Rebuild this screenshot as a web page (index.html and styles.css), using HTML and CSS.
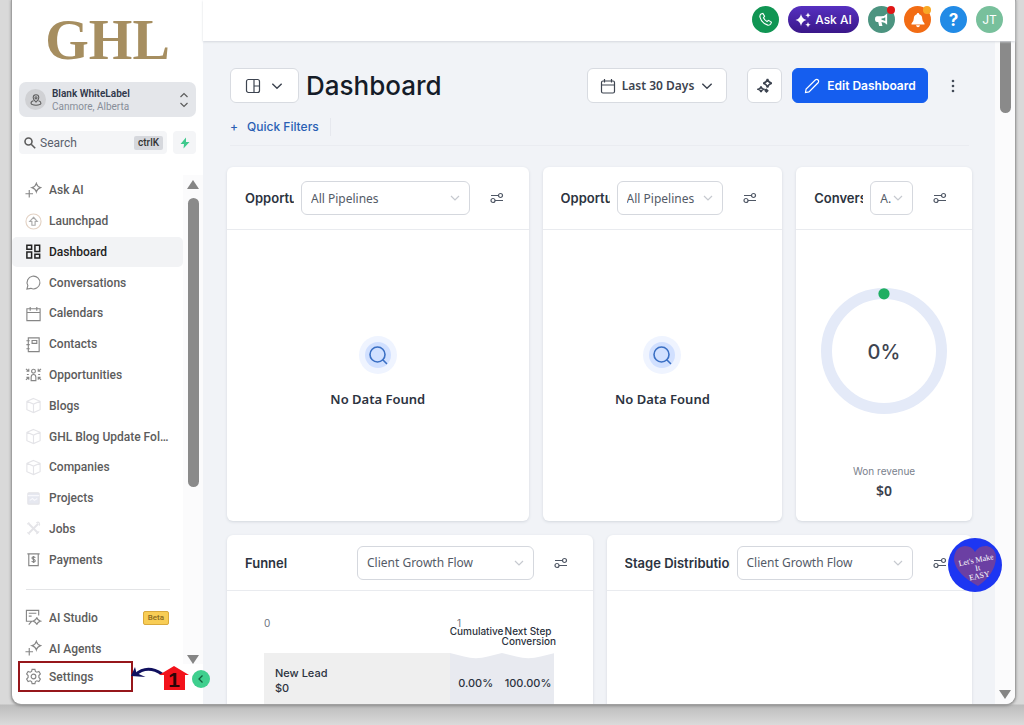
FILE: index.html
```
<!DOCTYPE html>
<html lang="en">

<head>
    <meta charset="UTF-8">
    <title>Dashboard</title>
    <link rel="stylesheet" href="styles.css">
</head>

<body>
    <!-- shared icons -->
    <svg class="sprite" width="0" height="0">
        <symbol id="chevron" viewBox="0 0 12 12"><path d="M2 4l4 4 4-4" /></symbol>
        <symbol id="filter" viewBox="0 0 14 12"><path d="M1 3.5h7M5 8.5h8" /><circle cx="10.5" cy="3.5" r="2" /><circle cx="3" cy="8.5" r="2" /></symbol>
        <symbol id="cube" viewBox="0 0 18 18"><path d="M9 1.5l7 3v9l-7 3-7-3v-9zM2 4.5l7 3 7-3M9 7.500v9" /></symbol>
        <symbol id="spark-plus" viewBox="0 0 18 18"><path d="M12 1.500q1 3.500 4.500 4.500-3.500 1-4.500 4.500-1-3.500-4.500-4.500 3.500-1 4.500-4.500zM4.500 8.500v8M.5 12.500h8" /></symbol>
        <symbol id="nodata" viewBox="0 0 38 38"><circle cx="19" cy="19" r="19" fill="#eff4ff" /><circle cx="19" cy="19" r="13" fill="#d1e0ff" /><circle cx="18.500" cy="18.500" r="7.500" fill="none" stroke="#3a6fc4" stroke-width="1.600" /><path d="M24 24l3.500 3.500" stroke="#3a6fc4" stroke-width="1.600" stroke-linecap="round" /></symbol>
        <symbol id="calendar" viewBox="0 0 16 16"><path d="M3 3h10q1.500 0 1.500 1.500v9q0 1.500-1.500 1.500h-10q-1.500 0-1.500-1.500v-9q0-1.500 1.500-1.500zM1.500 7h13M4.500 1v3.500M11.500 1v3.500" /></symbol>
    </svg>

    <div class="window">
        <aside class="sidebar">
            <div class="logo">GHL</div>
            <button class="account">
                <span class="avatar"><svg class="line" width="12" height="12" viewBox="0 0 14 14"><path d="M7 9.500q-3.300-3-3.300-5.200a3.300 3.300 0 0 1 6.600 0q0 2.200-3.300 5.200zM4 8q-3 1-2.800 3 .5 2 5.800 2t5.800-2q.2-2-2.800-3" /><circle cx="7" cy="4.500" r="1.200" /></svg></span>
                <span class="account-text"><b>Blank WhiteLabel</b><span>Canmore, Alberta</span></span>
                <svg class="line" width="10" height="16" viewBox="0 0 10 16"><path d="M1.500 5L5 1.500 8.500 5M1.500 11L5 14.500 8.500 11" /></svg>
            </button>
            <div class="search-row">
                <label class="search">
                    <svg class="line thick" width="12" height="12" viewBox="0 0 12 12"><circle cx="4.500" cy="4.500" r="3.500" /><path d="M7.200 7.200l4 4" /></svg>
                    <input type="text" placeholder="Search" aria-label="Search">
                    <kbd>ctrlK</kbd>
                </label>
                <button class="bolt" aria-label="Quick actions"><svg width="10" height="12" viewBox="0 0 10 12"><path d="M6 .5L.5 7h3.500L3.500 11.500 9.500 5H6z" fill="#3fc98d" /></svg></button>
            </div>

            <div class="menu-area">
                <nav class="menu">
                    <ul class="menu-list">
                        <li><a href="#"><svg class="line" viewBox="0 0 18 18"><use href="#spark-plus" /></svg><span>Ask AI</span></a></li>
                        <li><a href="#"><svg class="line pale" viewBox="0 0 18 18"><circle cx="9" cy="9" r="8" stroke="#e3d2c4" /><path d="M9 4.500l4 4.500h-2.300v4h-3.400v-4H5z" stroke="#aaa" /></svg><span>Launchpad</span></a></li>
                        <li><a href="#" class="active"><svg class="line thick" viewBox="0 0 18 18"><path d="M2 2.500h5v4H2zM10.500 2.500h5v6.500h-5zM2 9.500h5v6.500H2zM10.500 12h5v4h-5z" /></svg><span>Dashboard</span></a></li>
                        <li><a href="#"><svg class="line" viewBox="0 0 18 18"><path d="M2 16l1-3.800a6.800 6.800 0 1 1 3.200 3z" /></svg><span>Conversations</span></a></li>
                        <li><a href="#"><svg class="line" viewBox="0 0 18 18"><path d="M2 4h14v12.500H2zM2 8h14M5.500 2v4M12.500 2v4" /></svg><span>Calendars</span></a></li>
                        <li><a href="#"><svg class="line" viewBox="0 0 18 18"><path d="M3.500 2H15v14.500H3.500zM1.500 5h3.500M1.500 9.200h3.500M1.500 13.500h3.500M7.500 4.800h5v3h-5z" /></svg><span>Contacts</span></a></li>
                        <li><a href="#"><svg class="line" viewBox="0 0 18 18"><circle cx="9" cy="5.500" r="2" /><path d="M6.500 15.500V12q0-3 2.500-3t2.500 3v3.500zM1 3l3 2.500M4 3v2.500H1.500M17 3l-3 2.500M14 3v2.500h2.500M1 14.500l3-2.500M1.500 12H4v2.500M17 14.500L14 12M16.500 12H14v2.500M2 9h2M14 9h2" /></svg><span>Opportunities</span></a></li>
                        <li><a href="#"><svg class="line faint" viewBox="0 0 18 18"><use href="#cube" /></svg><span>Blogs</span></a></li>
                        <li><a href="#"><svg class="line faint" viewBox="0 0 18 18"><use href="#cube" /></svg><span>GHL Blog Update Folder</span></a></li>
                        <li><a href="#"><svg class="line faint" viewBox="0 0 18 18"><use href="#cube" /></svg><span>Companies</span></a></li>
                        <li><a href="#"><svg class="line faint" viewBox="0 0 18 18"><rect x="3" y="3" width="12" height="12" rx="1" fill="#e6e8f0" /><path d="M3 6h12M5 11l3-2 2 2 3-2" stroke="#f8f8fc" /></svg><span>Projects</span></a></li>
                        <li><a href="#"><svg class="line faint" viewBox="0 0 18 18"><path d="M4 4l10 10M14 4L4 14" stroke-width="2" /><path d="M2.500 4.500l2-2M12 3q2-1.500 3 0t0 3M12 15l3-3M2.500 13l2.500 2.500" /></svg><span>Jobs</span></a></li>
                        <li><a href="#"><svg class="line" viewBox="0 0 18 18"><path d="M2.500 3h13M4 3v12.500h10V3M11 7q-2-1.300-3.300-.4-.9 1.400 1.300 2.200 2.500.9 1.500 2.400-1.500 1-3.500-.3M9 5.300v7.400" /></svg><span>Payments</span></a></li>
                    </ul>
                    <ul class="menu-extra">
                        <li><a href="#"><svg class="line" viewBox="0 0 18 18"><path d="M8 13H1.500V1.500h13V7M4 4.500h8M4 7.500h3M4 16.500l3-3.500M12.500 9q.7 3 3.700 3.800-3 .8-3.700 3.800-.8-3-3.800-3.800 3-.8 3.800-3.800z" /></svg><span>AI Studio</span><em>Beta</em></a></li>
                        <li><a href="#"><svg class="line" viewBox="0 0 18 18"><use href="#spark-plus" /></svg><span>AI Agents</span></a></li>
                    </ul>
                </nav>
                <div class="scrollbar">
                    <i class="up"></i>
                    <i class="thumb"></i>
                    <i class="down"></i>
                </div>
            </div>

            <div class="settings-row">
                <a href="#" class="settings"><svg class="line" viewBox="0 0 18 18"><circle cx="9" cy="9" r="2.500" /><path d="M7.500 1.500h3l.5 2.200 1.500.8 2.200-.8 1.600 2.600-1.600 1.700v2l1.600 1.700-1.600 2.600-2.200-.8-1.500.8-.5 2.200h-3l-.5-2.200-1.500-.8-2.200.8-1.600-2.600L3.300 10V8L1.700 6.300l1.600-2.600 2.200.8L7 3.700z" /></svg><span>Settings</span></a>
                <!-- step marker pointing at Settings -->
                <svg class="step" width="58" height="30" viewBox="0 0 58 30">
                    <path d="M4 11Q16 0 31 10" fill="none" stroke="#10105e" stroke-width="3" />
                    <path d="M0 12L4 3l1.500 6 9 4z" fill="#10105e" />
                    <path d="M43 2l15 9h-4v15H33V11h-5z" fill="#f3121b" />
                    <text x="43" y="23" text-anchor="middle">1</text>
                </svg>
                <button class="collapse" aria-label="Collapse sidebar"><svg width="8" height="10" viewBox="0 0 8 10"><path d="M5.500 1.500L2 5l3.500 3.500" fill="none" stroke="#12603d" stroke-width="1.300" /></svg></button>
            </div>
        </aside>

        <main class="main">
            <header class="topbar">
                <button class="round phone" aria-label="Phone"><svg class="line" width="15" height="15" viewBox="0 0 16 16"><path d="M3.200 2.200l2-.7 1.800 3-1.200 1.700q1.200 2.600 3.800 4l1.700-1.300 3 1.900-.8 2q-1 1.600-3 1.200Q3.600 12 2 5.300q-.2-2.100 1.200-3.100z" /></svg></button>
                <button class="ask"><svg width="16" height="16" viewBox="0 0 16 16" fill="#fff"><path d="M6 2q1 5 5.500 6-4.500 1-5.500 6-1-5-5.500-6 4.500-1 5.500-6zM13 .5l.8 1.900 1.900.8-1.900.8-.8 1.900-.8-1.900-1.900-.8 1.900-.8zM13 10l.8 1.900 1.900.8-1.900.8-.8 1.900-.8-1.900-1.900-.8 1.900-.8z" /></svg>Ask AI</button>
                <button class="round news" aria-label="News"><svg width="15" height="15" viewBox="0 0 16 16" fill="#fff"><path fill-rule="evenodd" d="M14 1.500v12q-2.500-2.600-6-2.900L9 15H5.500l-1-4.400H3q-2-.3-2-3t2-3h4.500Q11.500 4.500 14 1.500zM12 5.500Q10 6.800 8 7v1.200q2 .2 4 1.500z" /></svg><i class="dot red"></i></button>
                <button class="round bell" aria-label="Notifications"><svg width="16" height="16" viewBox="0 0 16 16" fill="#fff"><path d="M8 1a1.200 1.200 0 0 1 1.200 1.300q3 1 3 4.200 0 3 2.300 5v1h-13v-1q2.300-2 2.300-5 0-3.200 3-4.200A1.200 1.200 0 0 1 8 1zM6 13.300h4q-.5 2-2 2t-2-2z" /></svg><i class="dot yellow"></i></button>
                <button class="round help">?</button>
                <button class="round user">JT</button>
            </header>

            <div class="scroll-area">
                <div class="content">
                    <div class="page-head">
                        <button class="btn layout" aria-label="Switch dashboard"><svg class="line" width="16" height="16" viewBox="0 0 16 16"><rect x="1.500" y="1.500" width="13" height="13" rx="2" /><path d="M9 1.500v13M9 8h5.500" /></svg><svg class="line" width="14" height="14"><use href="#chevron" /></svg></button>
                        <h1>Dashboard</h1>
                        <button class="btn range"><svg class="line" width="16" height="16"><use href="#calendar" /></svg>Last 30 Days<svg class="line" width="14" height="14"><use href="#chevron" /></svg></button>
                        <button class="btn magic" aria-label="AI insights"><svg class="line thick" width="16" height="16" viewBox="0 0 16 16"><path d="M10.500 1q.8 3.500 4.300 4.300-3.500.8-4.300 4.300-.8-3.500-4.300-4.300 3.500-.8 4.300-4.300zM4 8.500q.5 2.200 2.700 2.800Q4.500 11.900 4 14.100q-.5-2.200-2.700-2.800Q3.500 10.700 4 8.500zM9.500 11.500l1.200 1.200-1.200 1.200-1.200-1.200z" /></svg></button>
                        <button class="btn edit"><svg class="line" width="16" height="16" viewBox="0 0 16 16"><path d="M1.500 14.500l.6-3.500L11.500 1.700q1.500-.8 2.600.3t.2 2.500L5 13.900z" /></svg>Edit Dashboard</button>
                        <button class="more" aria-label="More"><svg width="4" height="14" viewBox="0 0 4 14" fill="#444b58"><circle cx="2" cy="2" r="1.300" /><circle cx="2" cy="7" r="1.300" /><circle cx="2" cy="12" r="1.300" /></svg></button>
                    </div>
                    <div class="filters">
                        <button><span>+</span>Quick Filters</button>
                    </div>

                    <div class="cards top">
                        <section class="card">
                            <div class="card-head">
                                <h2>Opportunity Status</h2>
                                <div class="select"><select aria-label="Pipeline"><option>All Pipelines</option></select><svg class="line" width="12" height="12"><use href="#chevron" /></svg></div>
                                <button aria-label="Filter"><svg class="line" width="14" height="12"><use href="#filter" /></svg></button>
                            </div>
                            <div class="empty"><svg width="38" height="38"><use href="#nodata" /></svg><p>No Data Found</p></div>
                        </section>
                        <section class="card">
                            <div class="card-head">
                                <h2>Opportunity Value</h2>
                                <div class="select"><select aria-label="Pipeline"><option>All Pipelines</option></select><svg class="line" width="12" height="12"><use href="#chevron" /></svg></div>
                                <button aria-label="Filter"><svg class="line" width="14" height="12"><use href="#filter" /></svg></button>
                            </div>
                            <div class="empty"><svg width="38" height="38"><use href="#nodata" /></svg><p>No Data Found</p></div>
                        </section>
                        <section class="card">
                            <div class="card-head">
                                <h2>Conversion Rate</h2>
                                <div class="select"><select aria-label="Pipeline"><option>A.</option></select><svg class="line" width="12" height="12"><use href="#chevron" /></svg></div>
                                <button aria-label="Filter"><svg class="line" width="14" height="12"><use href="#filter" /></svg></button>
                            </div>
                            <div class="rate">
                                <svg width="126" height="126" viewBox="0 0 126 126">
                                    <circle cx="63" cy="63" r="57.500" fill="none" stroke="#e4eaf8" stroke-width="11" />
                                    <circle cx="63" cy="5.800" r="5.600" fill="#1fae62" />
                                    <text x="63" y="71" text-anchor="middle">0%</text>
                                </svg>
                                <p>Won revenue</p>
                                <strong>$0</strong>
                            </div>
                        </section>
                    </div>

                    <div class="cards bottom">
                        <section class="card">
                            <div class="card-head">
                                <h2>Funnel</h2>
                                <div class="select"><select aria-label="Funnel pipeline"><option>Client Growth Flow</option></select><svg class="line" width="12" height="12"><use href="#chevron" /></svg></div>
                                <button aria-label="Filter"><svg class="line" width="14" height="12"><use href="#filter" /></svg></button>
                            </div>
                            <div class="funnel">
                                <div class="axis"><span>0</span><span>1</span></div>
                                <div class="funnel-row labels"><span></span><span>Cumulative</span><span>Next Step Conversion</span></div>
                                <div class="funnel-row stage">
                                    <div class="lead"><span>New Lead</span><span>$0</span></div>
                                    <div class="pct"><svg viewBox="0 0 52 6" preserveAspectRatio="none"><path d="M0 0h52L38 3.500Q26 7 14 3.500z" /></svg>0.00%</div>
                                    <div class="pct"><svg viewBox="0 0 52 6" preserveAspectRatio="none"><path d="M0 0h52L38 3.500Q26 7 14 3.500z" /></svg>100.00%</div>
                                </div>
                            </div>
                        </section>
                        <section class="card">
                            <div class="card-head">
                                <h2>Stage Distribution</h2>
                                <div class="select"><select aria-label="Stage pipeline"><option>Client Growth Flow</option></select><svg class="line" width="12" height="12"><use href="#chevron" /></svg></div>
                                <button aria-label="Filter"><svg class="line" width="14" height="12"><use href="#filter" /></svg></button>
                            </div>
                        </section>
                    </div>
                </div>
                <div class="scrollbar page">
                    <i class="thumb"></i>
                    <i class="down"></i>
                </div>
            </div>

            <button class="easy" aria-label="Let's Make It EASY">
                <svg width="54" height="54" viewBox="0 0 54 54">
                    <circle cx="27" cy="27" r="27" fill="#1d36f2" />
                    <path d="M30 48Q8 36 6 22 6 9 17 8q7 0 10 6 4-7 12-6 9 2 9 12-1 16-18 28z" fill="#6b3fa3" />
                    <g transform="rotate(-12 27 27)">
                        <text x="29" y="25">Let's Make</text>
                        <text x="29" y="33">It</text>
                        <text x="29" y="41">EASY</text>
                    </g>
                </svg>
            </button>
        </main>
    </div>
</body>

</html>
```
FILE: styles.css
```
* {
    box-sizing: border-box;
}
body {
    margin: 0;
    height: 100vh;
    padding: 0 9px 21px 12px;
    background: linear-gradient(to top, #dadada, #bcbcbc 20px, #d9d9d9 21px, #d9d9d9);
    font-family: Inter, "Liberation Sans", sans-serif;
    color: #2c3340;
    overflow: hidden;
}
button {
    border: none;
    padding: 0;
    background: none;
    font-family: inherit;
    color: inherit;
    cursor: pointer;
}
a {
    color: inherit;
    text-decoration: none;
}
ul, p, h1, h2 {
    margin: 0;
    padding: 0;
    list-style: none;
}
.sprite {
    position: absolute;
}
.line {
    fill: none;
    stroke: currentColor;
    stroke-width: 1.2;
    flex: none;
}
.thick {
    stroke-width: 1.6;
}
.window {
    position: relative;
    display: flex;
    height: 100%;
    background: #fff;
    border-radius: 0 0 9px 9px;
    box-shadow: 0 0 0 1px #a0a0a0, 0 1px 3px 1px #8c8c8c;
}

/* sidebar */
.sidebar {
    display: flex;
    flex-direction: column;
    width: 191px;
    flex: none;
    font-family: Roboto, "Liberation Sans", sans-serif;
    font-size: 12px;
    color: #5c5c5c;
}
.logo {
    padding-top: 12px;
    height: 82px;
    text-align: center;
    font: bold 56px/56px "Liberation Serif", serif;
    color: #a68e60;
}
.account {
    display: flex;
    align-items: center;
    gap: 6px;
    height: 35px;
    margin: 0 7px;
    padding: 0 7px 0 6px;
    border-radius: 7px;
    background: #e4e6ea;
    text-align: left;
}
.avatar {
    display: flex;
    align-items: center;
    justify-content: center;
    width: 21px;
    height: 21px;
    border-radius: 50%;
    background: #d0d1d4;
}
.account-text {
    flex: 1;
    padding-top: 1px;
    font-size: 10px;
    line-height: 13px;
    color: #888e99;
}
.account-text b {
    display: block;
    font-weight: 600;
    color: #30384a;
}
.search-row {
    display: flex;
    gap: 6px;
    height: 23px;
    margin: 14px 7px 0;
}
.search {
    display: flex;
    align-items: center;
    flex: 1;
    min-width: 0;
    gap: 4px;
    padding: 0 4px 0 5px;
    border-radius: 4px;
    background: #f4f5f7;
}
.search input {
    flex: 1;
    min-width: 0;
    width: 100%;
    border: none;
    padding: 0;
    background: none;
    font: 12px Roboto, sans-serif;
}
.search input::placeholder {
    color: #5a606c;
}
.search kbd {
    padding: 0 4px;
    border-radius: 2px;
    background: #d6d8dd;
    font: 500 10px/14px Roboto, sans-serif;
    color: #333;
}
.bolt {
    width: 23px;
    flex: none;
    border-radius: 4px;
    background: #f4f5f7;
    line-height: 0;
}
.menu-area {
    display: flex;
    flex: 1;
    min-height: 0;
    margin-top: 21px;
}
.menu {
    display: flex;
    flex-direction: column;
    flex: 1;
    min-width: 0;
    font-weight: 500;
}
.menu-list {
    display: flex;
    flex-direction: column;
    flex: 1;
}
.menu-list li {
    flex: 1;
}
.menu a {
    display: flex;
    align-items: center;
    gap: 7px;
    height: 100%;
    padding: 0 14px 0 13px;
    border-radius: 5px;
}
.menu a > svg, .settings > svg {
    width: 17px;
    height: 17px;
    color: #868686;
}
.menu a > svg.faint {
    color: #e4e4e8;
}
.menu a > svg.pale {
    color: #aaa;
}
.menu a span {
    flex: 1;
    overflow: hidden;
    white-space: nowrap;
    text-overflow: ellipsis;
}
.menu a.active {
    background: #f2f3f5;
    color: #222;
}
.menu a.active > svg {
    color: #222;
}
.menu-extra {
    margin-top: 14px;
    padding-top: 13px;
    background: linear-gradient(#e3e4e6, #e3e4e6) 14px 0 / 144px 1px no-repeat;
}
.menu-extra li {
    height: 31px;
}
.menu em {
    padding: 0 4px;
    border: 1px solid #d9a93c;
    border-radius: 2px;
    background: #f8cd55;
    font: 500 8px/12px Roboto, sans-serif;
    color: #8a6a20;
}
.scrollbar {
    display: flex;
    flex-direction: column;
    align-items: center;
    width: 20px;
    flex: none;
    background: #fbfbfc;
}
.scrollbar i {
    width: 11px;
}
.scrollbar .up {
    margin-top: 5px;
    border: 6px solid transparent;
    border-top: none;
    border-bottom: 9px solid #858585;
    width: 0;
}
.scrollbar .down {
    margin-top: auto;
    border: 6px solid transparent;
    border-bottom: none;
    border-top: 9px solid #858585;
    width: 0;
}
.scrollbar .thumb {
    height: 59%;
    margin-top: 9px;
    border-radius: 6px;
    background: #8a8a8a;
}
.settings-row {
    position: relative;
    height: 43px;
    margin-top: -3px;
    padding-left: 6px;
}
.settings {
    display: flex;
    align-items: center;
    gap: 7px;
    width: 115px;
    height: 31px;
    padding-left: 5px;
    border: 2px solid #96161b;
    font-weight: 500;
}
.step {
    position: absolute;
    left: 119px;
    top: 3px;
}
.step text {
    font: bold 21px "Liberation Sans", sans-serif;
    fill: #2b0508;
}
.collapse {
    position: absolute;
    right: -7px;
    top: 9px;
    width: 18px;
    height: 18px;
    border-radius: 50%;
    background: #3fcf8e;
    line-height: 0;
    z-index: 2;
}

/* top bar */
.main {
    position: relative;
    display: flex;
    flex-direction: column;
    flex: 1;
    min-width: 0;
}
.topbar {
    display: flex;
    justify-content: flex-end;
    gap: 9px;
    height: 41px;
    padding: 6px 12px 0 0;
    background: #fff;
    box-shadow: 0 1px 2px #d5d8de;
    z-index: 1;
}
.round {
    position: relative;
    display: flex;
    align-items: center;
    justify-content: center;
    width: 27px;
    height: 27px;
    border-radius: 50%;
    color: #fff;
}
.phone {
    background: #109553;
}
.ask {
    display: flex;
    align-items: center;
    justify-content: center;
    gap: 4px;
    width: 71px;
    height: 27px;
    border-radius: 14px;
    background: linear-gradient(#5630c0, #3a1789);
    font-size: 12px;
    font-weight: 500;
    color: #fff;
}
.news {
    background: #4c9480;
}
.bell {
    background: #f26c14;
}
.help {
    background: #228be6;
    font-size: 17px;
    font-weight: 700;
}
.user {
    background: #78c09c;
    font-size: 12px;
}
.dot {
    position: absolute;
    right: 0;
    top: 0;
    width: 8px;
    height: 8px;
    border-radius: 50%;
}
.red {
    background: #e01515;
}
.yellow {
    background: #f9a825;
}

/* page */
.scroll-area {
    display: flex;
    flex: 1;
    min-height: 0;
    overflow: hidden;
    border-radius: 0 0 9px 0;
}
.page .thumb {
    height: 72px;
    margin-top: 0;
    flex: none;
    border-radius: 0 0 6px 6px;
}
.page .down {
    margin-bottom: 5px;
}
.content {
    flex: 1;
    min-width: 0;
    padding: 27px 23px 0 24px;
    background: #f1f3f7;
}
.page-head {
    display: flex;
    align-items: center;
    height: 35px;
    padding: 0 12px 0 3px;
}
.btn {
    display: flex;
    align-items: center;
    justify-content: center;
    gap: 9px;
    height: 35px;
    border: 1px solid #d8dbe1;
    border-radius: 6px;
    background: #fff;
    color: #3d4450;
}
.layout {
    width: 69px;
}
h1 {
    flex: 1;
    margin-left: 7px;
    font-size: 26px;
    font-weight: 500;
    line-height: 34px;
    color: #151c28;
}
.range {
    gap: 6px;
    width: 140px;
    margin-right: 20px;
    font: 600 12px "Noto Sans", sans-serif;
}
.magic {
    width: 35px;
    margin-right: 10px;
}
.edit {
    width: 136px;
    gap: 7px;
    border-color: #155eef;
    background: #155eef;
    font-size: 12px;
    font-weight: 600;
    color: #fff;
}
.more {
    width: 14px;
    margin-left: 18px;
    line-height: 0;
}
.filters {
    height: 43px;
    margin: 0 3px 21px;
    padding-top: 15px;
    border-bottom: 1px solid #eaecf1;
}
.filters button {
    display: flex;
    align-items: center;
    gap: 9px;
    padding-right: 11px;
    border-right: 1px solid #e6e8ee;
    font-size: 12px;
    font-weight: 500;
    line-height: 18px;
    color: #2a5fb4;
}
.cards {
    display: grid;
    gap: 14px;
    margin-bottom: 14px;
}
.top {
    grid-template-columns: 302fr 240fr 176fr;
}
.bottom {
    grid-template-columns: 1fr 1fr;
}
.card {
    display: flex;
    flex-direction: column;
    min-width: 0;
    min-height: 354px;
    border-radius: 6px;
    background: #fff;
    box-shadow: 0 1px 3px #d3d7de;
}
.card-head {
    display: flex;
    align-items: center;
    height: 63px;
    padding: 0 25px 0 18px;
    border-bottom: 1px solid #e9ebef;
}
.bottom .card-head {
    height: 56px;
}
.card-head h2 {
    flex: none;
    width: 49px;
    margin-right: 7px;
    overflow: hidden;
    white-space: nowrap;
    font-size: 13px;
    font-weight: 600;
    line-height: 20px;
}
.bottom h2 {
    width: 105px;
}
.card-head button {
    margin-left: 20px;
    line-height: 0;
    color: #4f5765;
}
.select {
    position: relative;
    flex: 1;
    min-width: 0;
}
.select select {
    appearance: none;
    width: 100%;
    height: 34px;
    padding: 0 9px;
    border: 1px solid #d5d8de;
    border-radius: 6px;
    background: #fff;
    font: 12px "Noto Sans", sans-serif;
    color: #545b67;
}
.select svg {
    position: absolute;
    right: 9px;
    top: 11px;
    color: #c6c9cf;
    pointer-events: none;
}
.empty {
    display: flex;
    flex-direction: column;
    align-items: center;
    justify-content: center;
    flex: 1;
    gap: 15px;
    padding-bottom: 7px;
    font: 600 13px/20px "Noto Sans", sans-serif;
}
.rate {
    display: flex;
    flex-direction: column;
    align-items: center;
    padding-top: 58px;
}
.rate text {
    font-size: 20px;
    font-weight: 500;
    fill: #3e4450;
}
.rate p {
    margin-top: 50px;
    font-size: 10px;
    line-height: 14px;
    color: #7a818d;
}
.rate strong {
    font: 600 14px/26px "Noto Sans", sans-serif;
    color: #3a404c;
}

/* funnel chart */
.funnel {
    padding: 24px 38px 0 37px;
    font-size: 11px;
    font-weight: 500;
}
.axis {
    display: flex;
    justify-content: space-between;
    width: 197px;
    font-size: 10px;
    font-weight: 400;
    line-height: 16px;
    color: #6d7480;
}
.funnel-row {
    display: grid;
    grid-template-columns: 186fr 52fr 53fr;
}
.funnel-row > * {
    min-width: 0;
}
.labels {
    margin-top: -5px;
    padding-bottom: 7px;
    font-size: 10px;
    line-height: 10px;
    text-align: center;
}
.stage {
    height: 62px;
}
.lead {
    padding: 13px 11px;
    background: #efefef;
}
.lead span {
    display: block;
    line-height: 15px;
}
.pct {
    background: #e8eaf0;
    line-height: 38px;
    text-align: center;
}
.pct svg {
    display: block;
    width: 100%;
    height: 6px;
    margin-bottom: 5px;
    fill: #fff;
}

/* chat bubble */
.easy {
    position: absolute;
    right: 13px;
    bottom: 112px;
    line-height: 0;
    z-index: 2;
}
.easy text {
    font: 8px "Liberation Serif", serif;
    fill: #fff;
    text-anchor: middle;
}
```
